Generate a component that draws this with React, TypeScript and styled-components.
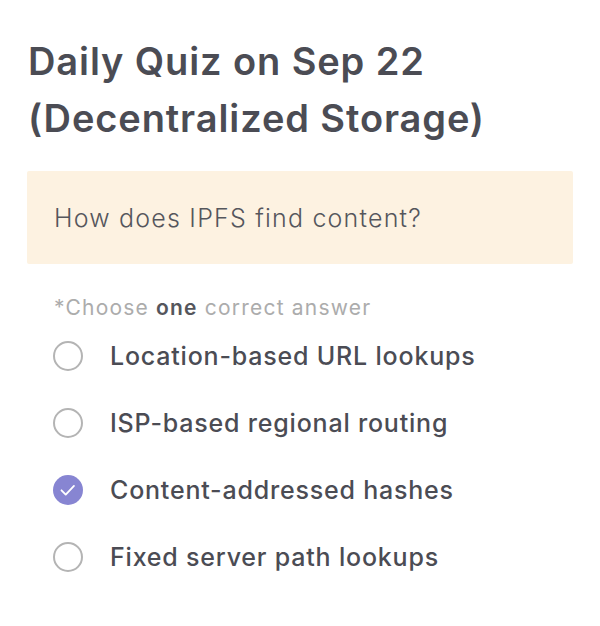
import React from "react";
import styled, {createGlobalStyle} from "styled-components";

const GlobalStyle = createGlobalStyle`
  body {
    margin: 0;
    background: #ffffff;
    font-family: Inter, "Noto Sans", sans-serif;
  }
`

const options = [
  "Location-based URL lookups",
  "ISP-based regional routing",
  "Content-addressed hashes",
  "Fixed server path lookups",
]

export default function App() {
  const selected = 2

  return (
    <>
      <GlobalStyle/>
      <Quiz>
        <Title>Daily Quiz on Sep 22<br/>(Decentralized Storage)</Title>
        <QuestionBox>How does IPFS find content?</QuestionBox>
        <Hint>*Choose <strong>one</strong> correct answer</Hint>
        <OptionList>
          {options.map((label, i) => (
            <Option key={label}>
              <Radio checked={i === selected}>
                {i === selected && (
                  <svg viewBox="0 0 24 24" width="26" height="26">
                    <path d="M6 12.3l3.9 3.9 7.6-8" fill="none" stroke="#fff" strokeWidth="1.7"
                          strokeLinecap="round" strokeLinejoin="round"/>
                  </svg>
                )}
              </Radio>
              <OptionLabel>{label}</OptionLabel>
            </Option>
          ))}
        </OptionList>
      </Quiz>
    </>
  )
}

const Quiz = styled.div`
  padding: 33px 27px 0 27px;
  display: flex;
  flex-direction: column;
`

const Title = styled.h1`
  margin: 0 0 0 1px;
  font-size: 38px;
  line-height: 57px;
  font-weight: 600;
  color: #4b4c54;
  letter-spacing: 0.9px;
`

const QuestionBox = styled.div`
  margin-top: 24px;
  height: 93px;
  box-sizing: border-box;
  padding: 0 27px;
  display: flex;
  align-items: center;
  background: #fdf2e1;
  border-radius: 2px;
  font-size: 25px;
  font-weight: 300;
  letter-spacing: 1.2px;
  color: #55565c;
`

const Hint = styled.div`
  margin: 31px 0 0 27px;
  font-size: 21px;
  line-height: 26px;
  letter-spacing: 1.2px;
  color: #acacac;

  strong {
    font-weight: 600;
    color: #55565c;
  }
`

const OptionList = styled.div`
  margin-top: 20px;
  display: flex;
  flex-direction: column;
  gap: 37px;
`

const Option = styled.div`
  display: flex;
  align-items: center;
  height: 30px;
  padding-left: 26px;
`

const Radio = styled.span<{checked?: boolean}>`
  width: 30px;
  height: 30px;
  flex-shrink: 0;
  box-sizing: border-box;
  border-radius: 50%;
  display: flex;
  align-items: center;
  justify-content: center;
  border: ${({checked}) => checked ? "none" : "2px solid #b4b4b4"};
  background: ${({checked}) => checked ? "#8785d2" : "transparent"};
`

const OptionLabel = styled.span`
  margin-left: 27px;
  font-size: 25px;
  font-weight: 500;
  letter-spacing: 0.8px;
  color: #4b4c54;
`
